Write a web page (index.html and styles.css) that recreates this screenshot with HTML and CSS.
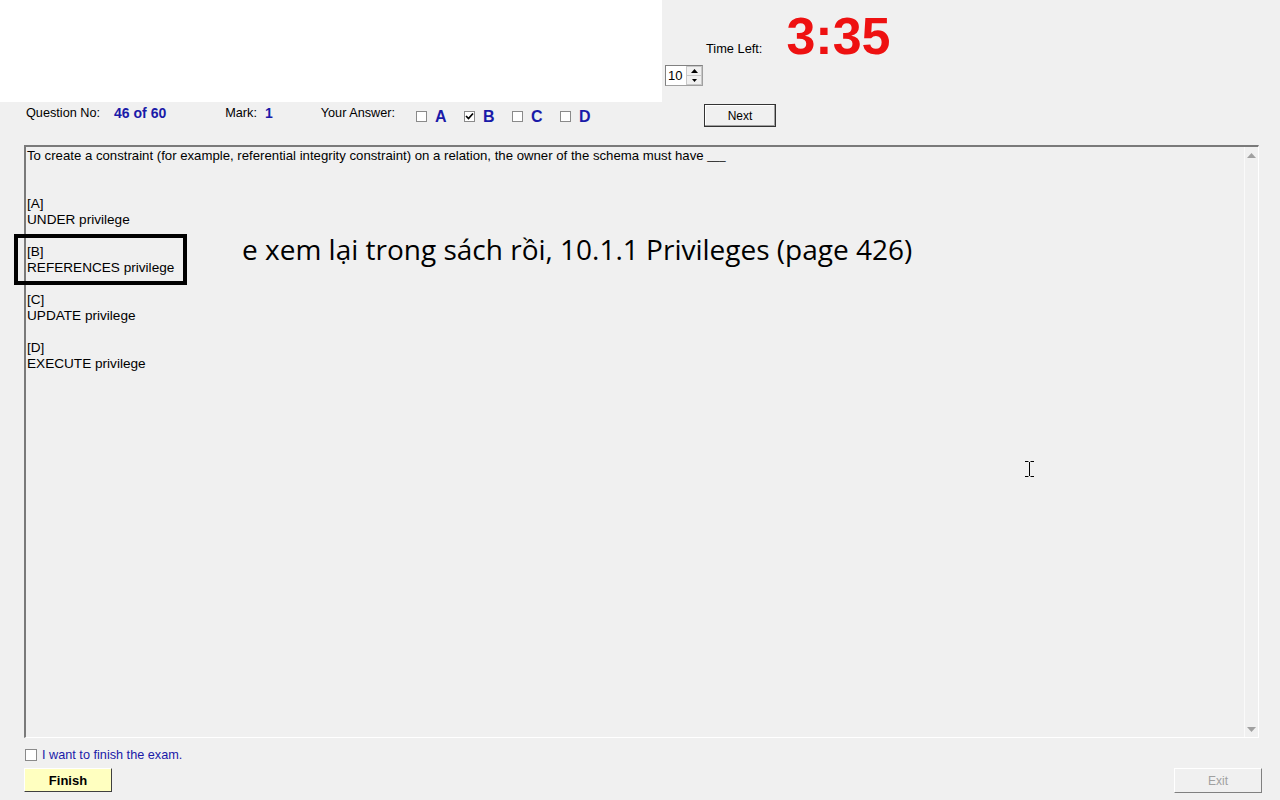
FILE: index.html
```html
<!DOCTYPE html>
<html>
<head>
<meta charset="utf-8">
<link rel="stylesheet" href="styles.css">
</head>
<body>
<div class="page">
  <div class="top">
    <div class="blank"></div>
    <div class="timerzone">
      <div class="spinner">
        <span class="spin-val">10</span>
        <span class="spin-btns">
          <span class="spin-up"><svg width="7" height="4" viewBox="0 0 7 4"><path d="M0 4L3.5 0L7 4Z" fill="#000"/></svg></span>
          <span class="spin-down"><svg width="5" height="3" viewBox="0 0 5 3"><path d="M0 0L2.5 3L5 0Z" fill="#000"/></svg></span>
        </span>
      </div>
      <div class="timelabel">Time Left:</div>
      <div class="timer">3:35</div>
    </div>
  </div>

  <div class="qrow">
    <span class="lbl">Question No:</span>
    <span class="val qno">46 of 60</span>
    <span class="lbl mark">Mark:</span>
    <span class="val mval">1</span>
    <span class="lbl answer">Your Answer:</span>
    <span class="opts">
      <span class="opt"><span class="cb"></span><span class="letter">A</span></span>
      <span class="opt"><span class="cb"><svg width="9" height="9" viewBox="0 0 9 9"><path d="M1 4L3.5 6.5L8 1.5" stroke="#000" stroke-width="1.7" fill="none"/></svg></span><span class="letter">B</span></span>
      <span class="opt"><span class="cb"></span><span class="letter">C</span></span>
      <span class="opt"><span class="cb"></span><span class="letter">D</span></span>
    </span>
    <button class="next">Next</button>
  </div>

  <div class="qbox">
    <div class="qtext">
      <div class="line">To create a constraint (for example, referential integrity constraint) on a relation, the owner of the schema must have <span class="blankline">___</span></div>
      <div class="option first"><div>[A]</div><div>UNDER privilege</div></div>
      <div class="option"><div>[B]</div><div>REFERENCES privilege</div></div>
      <div class="option"><div>[C]</div><div>UPDATE privilege</div></div>
      <div class="option"><div>[D]</div><div>EXECUTE privilege</div></div>
    </div>
    <div class="scrollbar">
      <svg class="arr" width="9" height="5" viewBox="0 0 9 5"><path d="M0 5L4.5 0L9 5Z" fill="#a0a0a0"/></svg>
      <svg class="arr" width="9" height="5" viewBox="0 0 9 5"><path d="M0 0L4.5 5L9 0Z" fill="#a0a0a0"/></svg>
    </div>
  </div>

  <div class="finishrow">
    <span class="cb small"></span>
    <span class="finishlbl">I want to finish the exam.</span>
  </div>
  <div class="btnrow">
    <button class="finish">Finish</button>
    <button class="exit">Exit</button>
  </div>

  <div class="highlight"></div>
  <div class="note">e xem lại trong sách rồi, 10.1.1 Privileges (page 426)</div>
  <svg class="ibeam" width="9" height="16" viewBox="0 0 9 16"><path d="M0 0.5H3.5M5.5 0.5H9M4.5 1V15M0 15.5H3.5M5.5 15.5H9" stroke="#000" stroke-width="1" fill="none"/></svg>
</div>
</body>
</html>
```

FILE: styles.css
```css
* { box-sizing: border-box; }
html, body { margin: 0; padding: 0; }
body {
  background: #f0f0f0;
  font-family: "Liberation Sans", Arial, sans-serif;
  color: #000;
}
.page {
  position: relative;
  width: 1280px;
  height: 800px;
  overflow: hidden;
}
.top {
  display: flex;
  height: 102px;
}
.blank {
  width: 662px;
  height: 102px;
  background: #fff;
}
.timerzone {
  display: flex;
  align-items: flex-start;
}
.spinner {
  margin-top: 65px;
  margin-left: 3px;
  width: 38px;
  height: 21px;
  background: #fff;
  border: 1px solid #a0a0a0;
  border-top-color: #808080;
  border-left-color: #808080;
  display: flex;
  align-items: center;
  justify-content: space-between;
  padding-left: 2px;
  font-size: 13px;
}
.spin-btns {
  display: flex;
  flex-direction: column;
  width: 16px;
  height: 19px;
}
.spin-up, .spin-down {
  flex: 1;
  display: flex;
  align-items: center;
  justify-content: center;
  background: #f0f0f0;
  border: 1px solid #c8c8c8;
}
.spin-up { border-bottom: none; }
.timelabel {
  margin-top: 41px;
  margin-left: 3px;
  font-size: 12.8px;
}
.timer {
  margin-left: 24px;
  margin-top: 10px;
  font-size: 52px;
  font-weight: bold;
  color: #ee1111;
  line-height: 1;
}
.qrow {
  display: flex;
  align-items: center;
  height: 26px;
  margin-top: 0;
  padding-left: 26px;
  font-size: 12.7px;
}
.lbl { color: #000; margin-top: -5px; }
.val { color: #1a1aa8; font-weight: bold; font-size: 14px; margin-top: -5px; }
.qno { margin-left: 14px; }
.mval { margin-left: 8px; }
.mark { margin-left: 59px; }
.answer { margin-left: 48px; }
.opts { display: flex; margin-left: 21px; margin-top: 2px; }
.opt { display: flex; align-items: center; width: 48px; }
.cb {
  width: 11px;
  height: 11px;
  background: #fff;
  border: 1px solid #8a8a8a;
  display: inline-flex;
  align-items: center;
  justify-content: center;
}
.letter {
  margin-left: 8px;
  color: #1a1aa8;
  font-weight: bold;
  font-size: 16px;
  margin-top: 2px;
}
.next {
  margin-left: 96px;
  width: 72px;
  height: 23px;
  margin-top: 1px;
  background: #f0f0f0;
  border: 1px solid #333;
  box-shadow: inset -1px -1px 0 #a0a0a0, inset 1px 1px 0 #fff;
  font-family: "Liberation Sans", Arial, sans-serif;
  font-size: 12px;
  padding: 0;
  color: #000;
}
.qbox {
  margin-top: 17px;
  margin-left: 24px;
  width: 1235px;
  height: 593px;
  border-top: 2px solid #7a7a7a;
  border-left: 2px solid #7a7a7a;
  border-right: 1px solid #fff;
  border-bottom: 1px solid #fff;
  display: flex;
}
.qtext {
  flex: 1;
  padding: 1px 0 0 1px;
  font-size: 13.6px;
  line-height: 16px;
}
.line { font-size: 13.2px; }
.blankline { font-size: 11px; }
.option { margin-top: 16px; }
.option.first { margin-top: 32px; }
.scrollbar {
  width: 14px;
  border-left: 1px solid #fafafa;
  display: flex;
  flex-direction: column;
  justify-content: space-between;
  align-items: center;
  padding: 6px 0 5px;
}
.finishrow {
  display: flex;
  align-items: center;
  margin-left: 25px;
  margin-top: 10px;
}
.cb.small { width: 12px; height: 12px; }
.finishlbl {
  margin-left: 5px;
  color: #1a1aa8;
  font-size: 12.7px;
}
.btnrow {
  display: flex;
  justify-content: space-between;
  margin-top: 6px;
  padding: 0 18px 0 24px;
}
.finish {
  width: 88px;
  height: 24px;
  background: #ffffc0;
  border: 1px solid #fff;
  border-right-color: #404040;
  border-bottom-color: #404040;
  font-family: "Liberation Sans", Arial, sans-serif;
  font-weight: bold;
  font-size: 13px;
  padding: 0;
}
.exit {
  width: 88px;
  height: 25px;
  background: #f0f0f0;
  border: 1px solid #fff;
  border-right-color: #808080;
  border-bottom-color: #808080;
  font-family: "Liberation Sans", Arial, sans-serif;
  font-size: 12px;
  color: #a0a0a0;
  padding: 0;
}
.highlight {
  position: absolute;
  left: 14px;
  top: 234px;
  width: 173px;
  height: 51px;
  border: 4px solid #000;
}
.note {
  position: absolute;
  left: 242px;
  top: 230px;
  font-family: "Open Sans", sans-serif;
  font-size: 28px;
  color: #000;
  white-space: nowrap;
}
.ibeam {
  position: absolute;
  left: 1025px;
  top: 461px;
}
```
